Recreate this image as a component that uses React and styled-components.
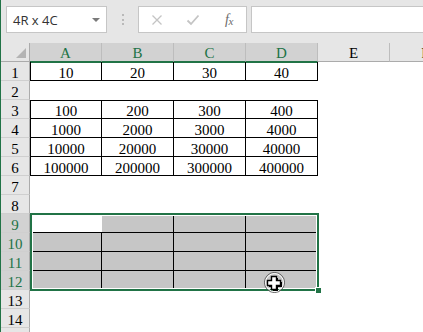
import React from "react";
import styled, { createGlobalStyle } from "styled-components";

const GREEN = "#217346";

const GlobalStyle = createGlobalStyle`
  body {
    margin: 0;
    background: #fff;
  }
`;

const Window = styled.div`
  position: relative;
  width: 423px;
  height: 332px;
  overflow: hidden;
  box-sizing: border-box;
  border-left: 1px solid ${GREEN};
  background: #fff;
  font-family: "Liberation Serif", "Noto Sans CJK SC", serif;
`;

const Toolbar = styled.div`
  display: flex;
  align-items: flex-start;
  height: 43px;
  box-sizing: border-box;
  padding: 6px 0 0 5px;
  background: #e6e6e6;
`;

const Field = styled.div`
  box-sizing: border-box;
  height: 27px;
  background: #fff;
  border: 1px solid #c6c6c6;
  display: flex;
  align-items: center;
  flex: none;
`;

const NameBox = styled(Field)`
  width: 101px;
  padding: 0 6px 0 6px;
  justify-content: space-between;
  font-family: "Open Sans", "Noto Sans", sans-serif;
  font-size: 13px;
  color: #333;
`;

const Arrow = styled.span`
  width: 0;
  height: 0;
  border-left: 4px solid transparent;
  border-right: 4px solid transparent;
  border-top: 4px solid #7a7a7a;
  margin-top: 1px;
`;

const Dots = styled.div`
  width: 31px;
  flex: none;
  display: flex;
  flex-direction: column;
  align-items: center;
  gap: 2.5px;
  padding-top: 8px;

  span {
    width: 2px;
    height: 2px;
    background: #b9b9b9;
  }
`;

const FxBox = styled(Field)`
  width: 109px;
  display: grid;
  grid-template-columns: repeat(3, 36px);
  align-items: center;
  justify-items: center;
`;

const Fx = styled.span`
  font-family: "Liberation Serif", serif;
  font-style: italic;
  font-size: 14px;
  color: #6b6b6b;
  letter-spacing: -0.5px;

  sub {
    font-size: 11px;
    vertical-align: -1px;
  }
`;

const FormulaInput = styled(Field)`
  flex: 1;
  margin-left: 4px;
  border-right: none;
`;

const HeaderRow = styled.div`
  display: flex;
  height: 19px;
`;

const Corner = styled.div`
  position: relative;
  flex: none;
  width: 29px;
  box-sizing: border-box;
  background: #e6e6e6;
  border-right: 1px solid #ababab;
  border-bottom: 1px solid #ababab;

  &::after {
    content: "";
    position: absolute;
    right: 3px;
    bottom: 3px;
    border-style: solid;
    border-width: 0 0 10px 10px;
    border-color: transparent transparent #b4b4b4 transparent;
  }
`;

const ColHead = styled.div`
  flex: none;
  width: 72px;
  box-sizing: border-box;
  padding-top: 2px;
  line-height: 16px;
  font-size: 15px;
  text-align: center;
  background: ${(p) => (p.$sel ? "#d2d2d2" : "#e6e6e6")};
  color: ${(p) => (p.$sel ? GREEN : "#000")};
  border-right: 1px solid #bdbdbd;
  border-bottom: 1px solid ${(p) => (p.$sel ? GREEN : "#ababab")};
  box-shadow: ${(p) => (p.$sel ? `0 1px 0 ${GREEN}` : "none")};
`;

const Row = styled.div`
  display: flex;
  height: 19px;
`;

const RowHead = styled.div`
  flex: none;
  width: 29px;
  box-sizing: border-box;
  padding-top: 3px;
  line-height: 16px;
  font-size: 15px;
  text-align: center;
  background: ${(p) => (p.$sel ? "#d2d2d2" : "#e6e6e6")};
  color: ${(p) => (p.$sel ? GREEN : "#000")};
  border-right: 1px solid #ababab;
  border-bottom: 1px solid #cfcfcf;
`;

const line = (on) => (on ? "1px solid #000" : "none");

const Cell = styled.div`
  flex: none;
  width: 72px;
  box-sizing: border-box;
  padding-top: ${(p) => (p.$t ? 2 : 3)}px;
  line-height: 16px;
  font-size: 15px;
  text-align: center;
  color: #000;
  background: ${(p) => p.$fill || "transparent"};
  border-top: ${(p) => line(p.$t)};
  border-right: ${(p) => line(p.$r)};
  border-bottom: ${(p) => line(p.$b)};
  border-left: ${(p) => line(p.$l)};
`;

const Selection = styled.div`
  position: absolute;
  left: 29px;
  top: 213px;
  width: 289px;
  height: 78px;
  box-sizing: border-box;
  border: 2px solid ${GREEN};
  box-shadow: inset 0 0 0 1px #fff;
  pointer-events: none;
`;

const Handle = styled.div`
  position: absolute;
  right: -5px;
  bottom: -5px;
  width: 7px;
  height: 7px;
  box-sizing: border-box;
  background: ${GREEN};
  border: 1px solid #fff;
`;

const Cursor = styled.svg`
  position: absolute;
  left: 262px;
  top: 272px;
`;

const cols = ["A", "B", "C", "D", "E", "F"];
const values = {
  1: [10, 20, 30, 40],
  3: [100, 200, 300, 400],
  4: [1000, 2000, 3000, 4000],
  5: [10000, 20000, 30000, 40000],
  6: [100000, 200000, 300000, 400000],
};
const boxed = [1, 3, 4, 5, 6, 9, 10, 11, 12];
const rows = Array.from({ length: 15 }, (_, i) => i + 1);

const App = () => {
  return (
    <>
      <GlobalStyle />
      <Window>
        <Toolbar>
          <NameBox>
            <span>4R x 4C</span>
            <Arrow />
          </NameBox>
          <Dots>
            <span />
            <span />
            <span />
          </Dots>
          <FxBox>
            <svg width="12" height="12" viewBox="0 0 12 12">
              <path d="M1.5 1.5 L10.5 10.5 M10.5 1.5 L1.5 10.5" stroke="#c4c4c4" strokeWidth="1.3" fill="none" />
            </svg>
            <svg width="14" height="12" viewBox="0 0 14 12">
              <path d="M1.5 6.5 L5 10 L12.5 1.5" stroke="#c4c4c4" strokeWidth="1.8" fill="none" />
            </svg>
            <Fx>
              f<sub>x</sub>
            </Fx>
          </FxBox>
          <FormulaInput />
        </Toolbar>

        <HeaderRow>
          <Corner />
          {cols.map((c, i) => (
            <ColHead key={c} $sel={i < 4}>
              {c}
            </ColHead>
          ))}
        </HeaderRow>

        {rows.map((r) => {
          const sel = r >= 9 && r <= 12;
          const hasBox = boxed.includes(r);
          return (
            <Row key={r}>
              <RowHead $sel={sel}>{r}</RowHead>
              {cols.map((c, i) => {
                const inBox = hasBox && i < 4;
                const active = r === 9 && i === 0;
                return (
                  <Cell
                    key={c}
                    $t={inBox && (r === 3 || r === 9)}
                    $r={inBox && !active}
                    $b={inBox}
                    $l={inBox && i === 0}
                    $fill={sel && i < 4 && !active ? "#c6c6c6" : null}
                  >
                    {values[r] && i < 4 ? values[r][i] : ""}
                  </Cell>
                );
              })}
            </Row>
          );
        })}

        <Selection>
          <Handle />
        </Selection>

        <Cursor width="24" height="24" viewBox="0 0 24 24">
          <circle cx="11.5" cy="10.5" r="10" fill="none" stroke="#555" strokeWidth="1" />
          <circle cx="11.5" cy="10.5" r="9" fill="none" stroke="#fff" strokeWidth="1" />
          <path
            d="M10 6 H15 V10 H19 V15 H15 V19 H10 V15 H6 V10 H10 Z"
            fill="#000"
          />
          <path
            d="M8.5 4.5 H13.5 V8.5 H17.5 V13.5 H13.5 V17.5 H8.5 V13.5 H4.5 V8.5 H8.5 Z"
            fill="#fff"
            stroke="#000"
            strokeWidth="1.4"
          />
        </Cursor>
      </Window>
    </>
  );
};

export default App;
